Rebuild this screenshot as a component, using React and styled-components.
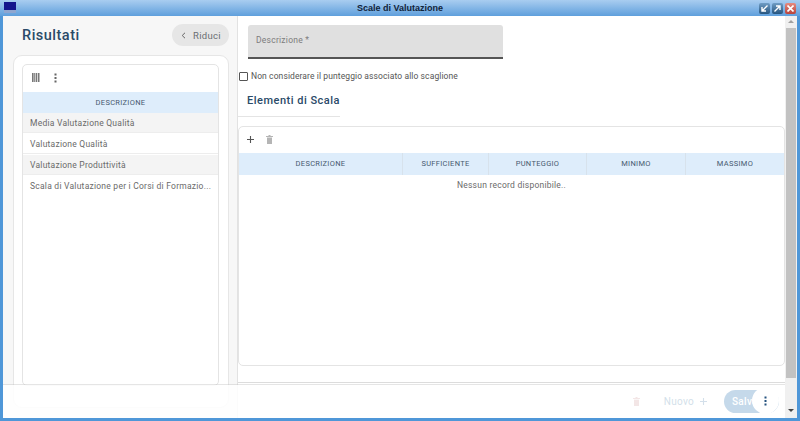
import React from 'react'
import styled, { createGlobalStyle } from 'styled-components'

const GlobalStyle = createGlobalStyle`
	html, body {
		margin: 0;
		padding: 0;
		overflow: hidden;
		background: #fff;
		font-family: Roboto, "Liberation Sans", sans-serif;
	}
`

const Window = styled.div`
	position: relative;
	width: 800px;
	height: 421px;
	display: flex;
	flex-direction: column;
	overflow: hidden;
	background: #4f97d8;
`

const TitleBar = styled.div`
	position: relative;
	height: 16px;
	flex: none;
	display: flex;
	align-items: center;
	justify-content: center;
	background: linear-gradient(#a9cdf0, #5f9fdc);
	font-family: "Liberation Sans", sans-serif;
	font-size: 9px;
	font-weight: 700;
	color: #10233a;
`

const AppIcon = styled.svg`
	position: absolute;
	left: 4px;
	top: 2px;
`

const WindowButtons = styled.div`
	position: absolute;
	right: 4px;
	top: 3px;
	display: flex;
	gap: 2px;
`

const WindowButton = styled.div`
	width: 11px;
	height: 11px;
	border-radius: 2px;
	display: flex;
	align-items: center;
	justify-content: center;
	background: ${p => (p.$close ? 'linear-gradient(#e58a80, #b9443c)' : 'linear-gradient(#6f9cc4, #27557f)')};
`

const Body = styled.div`
	flex: 1;
	min-height: 0;
	margin: 0 3px 3px 3px;
	display: flex;
	background: #fff;
`

const Sidebar = styled.aside`
	width: 235px;
	flex: none;
	box-sizing: border-box;
	padding: 8px 8px 0 10px;
	background: #f7f7f7;
	border-right: 1px solid #e2e2e2;
	display: flex;
	flex-direction: column;
`

const SidebarHead = styled.div`
	height: 22px;
	display: flex;
	align-items: center;
	justify-content: space-between;
	padding-left: 9px;
	margin-bottom: 9px;
`

const Title = styled.h1`
	margin: 0;
	font-size: 14.5px;
	font-weight: 500;
	letter-spacing: 0.5px;
	color: #2a4a68;
`

const CollapseButton = styled.button`
	width: 57px;
	height: 22px;
	border: 0;
	padding: 0 0 0 9px;
	border-radius: 11px;
	background: #e6e6e6;
	color: #6a6f73;
	font: 400 9.5px Roboto, sans-serif;
	letter-spacing: 0.3px;
	display: flex;
	align-items: center;
	gap: 7px;
`

const ListCard = styled.div`
	height: 353px;
	flex: none;
	box-sizing: border-box;
	padding: 8px 9px 0 8px;
	background: #fff;
	border: 1px solid #e6e6e6;
	border-radius: 9px;
`

const GridBox = styled.div`
	box-sizing: border-box;
	height: 322px;
	border: 1px solid #e4e4e4;
	border-radius: 5px;
	overflow: hidden;
`

const Toolbar = styled.div`
	box-sizing: border-box;
	height: ${p => p.$height}px;
	padding: 0 0 2px ${p => p.$pad}px;
	display: flex;
	align-items: center;
	gap: ${p => p.$gap}px;
	color: #555;
`

const HeadRow = styled.div`
	height: ${p => p.$height}px;
	display: flex;
	background: #deedfb;
`

const HeadCell = styled.div`
	flex: ${p => (p.$width ? `none` : 1)};
	width: ${p => (p.$width ? `${p.$width}px` : 'auto')};
	box-sizing: border-box;
	padding-bottom: 1px;
	display: flex;
	align-items: center;
	justify-content: center;
	font-size: 7.5px;
	font-weight: 400;
	letter-spacing: 0.3px;
	color: #46596f;
	border-right: 1px solid #d7e2ec;
	&:last-child {
		border-right: 0;
	}
`

const ListRow = styled.div`
	box-sizing: border-box;
	height: 20px;
	margin-bottom: 1px;
	padding: 0 7px;
	display: flex;
	align-items: center;
	font-size: 8.5px;
	letter-spacing: 0.24px;
	color: #6a6a6a;
	white-space: nowrap;
	background: ${p => (p.$striped ? '#f4f4f4' : '#fff')};
	border-bottom: 1px solid #ededed;
	&:last-child {
		border-bottom: 0;
	}
`

const Main = styled.main`
	flex: 1;
	min-width: 0;
	display: flex;
	flex-direction: column;
`

const Field = styled.div`
	box-sizing: border-box;
	width: 255px;
	height: 34px;
	margin: 9px 0 0 10px;
	padding: 10px 8px 0;
	background: #e0e0e0;
	border-bottom: 2px solid #555;
	border-radius: 3px 3px 0 0;
	font-size: 8.5px;
	letter-spacing: 0.25px;
	color: #7c7c7c;
`

const CheckRow = styled.label`
	height: 14px;
	margin: 10px 0 0 1px;
	display: flex;
	align-items: center;
	gap: 3px;
	font-size: 8.5px;
	letter-spacing: 0.1px;
	color: #555;
`

const CheckBox = styled.span`
	box-sizing: border-box;
	width: 9px;
	height: 9px;
	border: 1px solid #555;
	border-radius: 1px;
	background: #fff;
`

const Section = styled.h2`
	box-sizing: border-box;
	width: 102px;
	height: 25px;
	margin: 9px 0 0 0;
	padding: 2px 0 0 9px;
	font-size: 11px;
	font-weight: 500;
	letter-spacing: 0.5px;
	color: #2a4a68;
	border-bottom: 1px solid #e4e4e4;
`

const TableCard = styled.div`
	box-sizing: border-box;
	height: 240px;
	margin-top: 9px;
	border: 1px solid #e4e4e4;
	border-radius: 5px;
	overflow: hidden;
`

const Empty = styled.div`
	height: 20px;
	display: flex;
	align-items: center;
	justify-content: center;
	font-size: 8.5px;
	letter-spacing: 0.24px;
	color: #6a6a6a;
`

const Divider = styled.div`
	height: 1px;
	margin-top: 16px;
	background: #dcdcdc;
`

const ScrollBar = styled.div`
	width: 12px;
	flex: none;
	display: flex;
	flex-direction: column;
	align-items: center;
	background: #f0f0f0;
`

const ScrollThumb = styled.div`
	width: 10px;
	height: 350px;
	margin-top: 5px;
	background: #c2c2c2;
`

const Arrow = styled.div`
	width: 0;
	height: 0;
	margin: ${p => p.$margin};
	border-left: 3px solid transparent;
	border-right: 3px solid transparent;
	${p => (p.$up ? 'border-bottom: 3px solid #a0a0a0;' : 'border-top: 3px solid #444;')}
`

const Footer = styled.footer`
	position: absolute;
	left: 3px;
	right: 15px;
	bottom: 3px;
	height: 33px;
	display: flex;
	align-items: center;
	justify-content: flex-end;
	background: rgba(255, 255, 255, 0.85);
	box-shadow: 0 -1px 0 rgba(190, 190, 190, 0.4);
`

const NewButton = styled.div`
	display: flex;
	align-items: center;
	gap: 6px;
	margin: 0 17px 0 24px;
	font-size: 10px;
	letter-spacing: 0.3px;
	color: #d3dfea;
`

const SaveButton = styled.div`
	width: 55px;
	height: 23px;
	margin-right: 6px;
	padding-left: 8px;
	box-sizing: border-box;
	display: flex;
	align-items: center;
	border-radius: 12px;
	background: #c5d9ea;
	color: #fff;
	font-size: 10px;
	font-weight: 500;
	letter-spacing: 0.3px;
`

const Fab = styled.div`
	position: absolute;
	left: 752px;
	top: 387px;
	width: 27px;
	height: 27px;
	border-radius: 50%;
	display: flex;
	align-items: center;
	justify-content: center;
	background: #fff;
`

const BarsIcon = () => (
	<svg width="8" height="9" viewBox="0 0 8 9" fill="#777">
		<rect x="0" width="1.6" height="9" />
		<rect x="2.2" width="1.2" height="9" />
		<rect x="4" width="1.2" height="9" />
		<rect x="5.9" width="1.6" height="9" />
	</svg>
)

const DotsIcon = ({ color = '#666' }) => (
	<svg width="3" height="10" viewBox="0 0 3 10" fill={color}>
		<rect x="0.5" y="0.5" width="2" height="2" />
		<rect x="0.5" y="4" width="2" height="2" />
		<rect x="0.5" y="7.5" width="2" height="2" />
	</svg>
)

const PlusIcon = ({ color = '#555', size = 7 }) => (
	<svg width={size} height={size} viewBox="0 0 7 7" stroke={color} strokeWidth="1.1">
		<path d="M3.5 0V7M0 3.5H7" />
	</svg>
)

const TrashIcon = ({ color = '#b5b5b5' }) => (
	<svg width="7" height="9" viewBox="0 0 7 9" fill={color}>
		<rect x="0" y="1" width="7" height="1" />
		<rect x="2.5" y="0" width="2" height="1" />
		<path d="M1 2.6H6V9H1Z" />
	</svg>
)

const columns = [
	{ label: 'DESCRIZIONE', width: 164 },
	{ label: 'SUFFICIENTE', width: 86 },
	{ label: 'PUNTEGGIO', width: 98 },
	{ label: 'MINIMO', width: 99 },
	{ label: 'MASSIMO' }
]

const results = [
	'Media Valutazione Qualità',
	'Valutazione Qualità',
	'Valutazione Produttività',
	'Scala di Valutazione per i Corsi di Formazio...'
]

export default function App() {
	return (
		<>
			<GlobalStyle />
			<Window>
				<TitleBar>
					<AppIcon width="12" height="11" viewBox="0 0 12 11">
						<rect width="12" height="11" fill="#14148c" />
						<rect y="8" width="12" height="3" fill="#8fa6d0" />
					</AppIcon>
					Scale di Valutazione
					<WindowButtons>
						<WindowButton>
							<svg width="7" height="7" viewBox="0 0 7 7" stroke="#fff" strokeWidth="1.4" fill="none">
								<path d="M6.5 0.5L1.5 5.5M1 2V6H5" />
							</svg>
						</WindowButton>
						<WindowButton>
							<svg width="7" height="7" viewBox="0 0 7 7" stroke="#fff" strokeWidth="1.4" fill="none">
								<path d="M0.5 6.5L5.5 1.5M2 1H6V5" />
							</svg>
						</WindowButton>
						<WindowButton $close>
							<svg width="7" height="7" viewBox="0 0 7 7" stroke="#fff" strokeWidth="1.6">
								<path d="M0.5 0.5L6.5 6.5M6.5 0.5L0.5 6.5" />
							</svg>
						</WindowButton>
					</WindowButtons>
				</TitleBar>
				<Body>
					<Sidebar>
						<SidebarHead>
							<Title>Risultati</Title>
							<CollapseButton>
								<svg width="5" height="7" viewBox="0 0 5 7" fill="none" stroke="#666" strokeWidth="1">
									<path d="M4 0.8L1.2 3.5L4 6.2" />
								</svg>
								Riduci
							</CollapseButton>
						</SidebarHead>
						<ListCard>
							<GridBox>
								<Toolbar $height={27} $gap={14} $pad={9}>
									<BarsIcon />
									<DotsIcon />
								</Toolbar>
								<HeadRow $height={21}>
									<HeadCell>DESCRIZIONE</HeadCell>
								</HeadRow>
								{results.map((name, i) => (
									<ListRow key={name} $striped={i % 2 === 0}>
										{name}
									</ListRow>
								))}
							</GridBox>
						</ListCard>
					</Sidebar>
					<Main>
						<Field>Descrizione *</Field>
						<CheckRow>
							<CheckBox />
							Non considerare il punteggio associato allo scaglione
						</CheckRow>
						<Section>Elementi di Scala</Section>
						<TableCard>
							<Toolbar $height={26} $gap={12} $pad={8}>
								<PlusIcon />
								<TrashIcon />
							</Toolbar>
							<HeadRow $height={22}>
								{columns.map(c => (
									<HeadCell key={c.label} $width={c.width}>
										{c.label}
									</HeadCell>
								))}
							</HeadRow>
							<Empty>Nessun record disponibile..</Empty>
						</TableCard>
						<Divider />
					</Main>
					<ScrollBar>
						<Arrow $up $margin="4px 0 0" />
						<ScrollThumb />
						<Arrow $margin="31px 0 0" />
					</ScrollBar>
				</Body>
				<Footer>
					<TrashIcon color="#f3e6e6" />
					<NewButton>
						Nuovo
						<PlusIcon color="#d3dfea" size={7} />
					</NewButton>
					<SaveButton>Salva</SaveButton>
				</Footer>
				<Fab>
					<DotsIcon color="#24527f" />
				</Fab>
			</Window>
		</>
	)
}
